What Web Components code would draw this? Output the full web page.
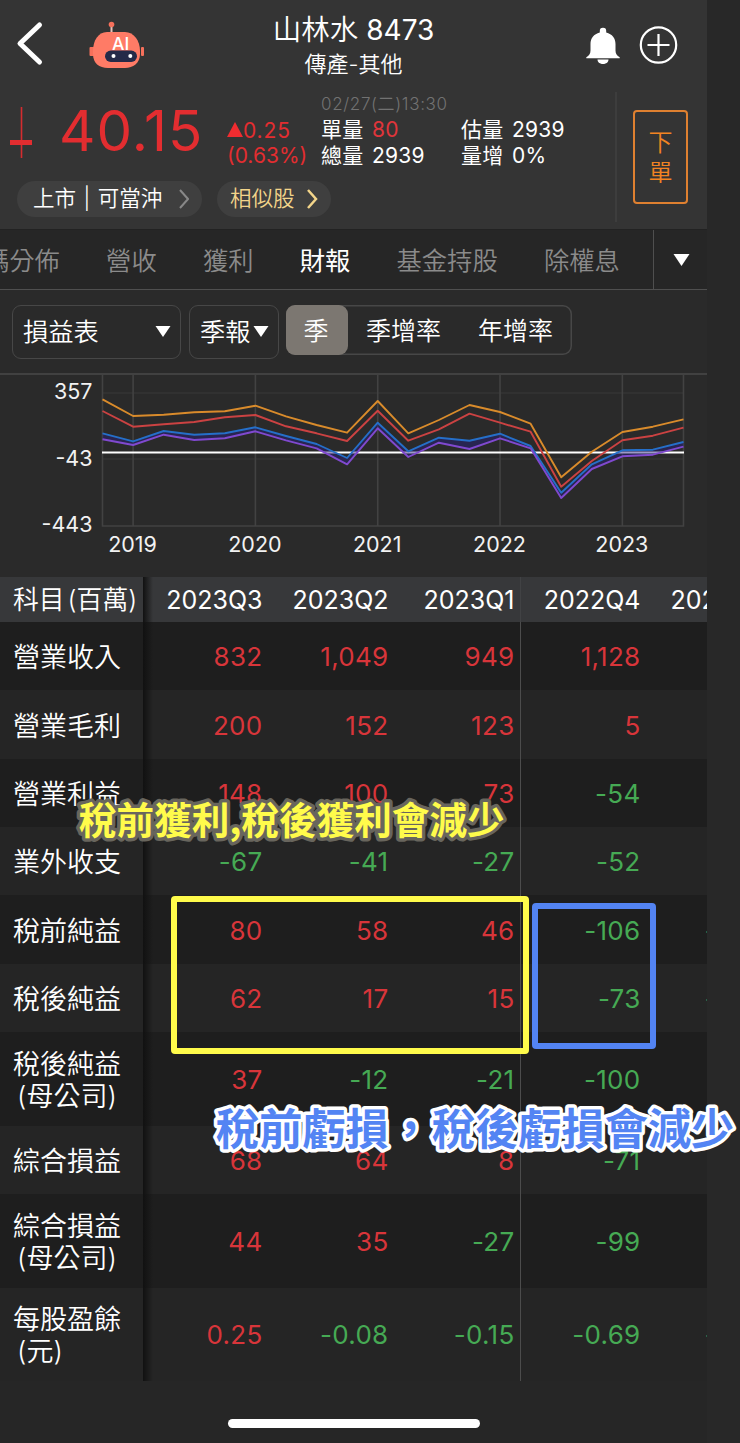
<!DOCTYPE html>
<html lang="zh-Hant">
<head>
<meta charset="utf-8">
<title>山林水 8473</title>
<style>
  body {
    margin: 0;
    background: #282828;
    color: #fff;
    font-family: Inter, "Noto Sans CJK TC", sans-serif;
    overflow: hidden;
  }
</style>
</head>
<body>
<stock-page></stock-page>

<script>
class StockHeader extends HTMLElement {
  constructor() {
    super();
    this.attachShadow({ mode: 'open' });
  }

  connectedCallback() {
    this.shadowRoot.innerHTML = `
      <style>
        :host {
          display: grid;
          grid-template-columns: 80px 150px 1fr 167px 80px;
          height: 90px;
          align-items: start;
        }
        svg { display: block; }
        .back { margin: 21px 0 0 16px; }
        .robot { margin: 20px 0 0 8px; }
        .title { text-align: center; padding: 11px 0 0 17px; }
        h1 { margin: 0; font-size: 28.5px; line-height: 38px; font-weight: 350; white-space: nowrap; }
        h1 span { font-size: 28px; font-weight: 400; }
        p { margin: 0; font-size: 22px; line-height: 30px; font-weight: 350; white-space: nowrap; }
        .bell { justify-self: end; margin: 27px 7px 0 0; }
        .add { margin: 26px 0 0 12px; }
      </style>
      <svg class="back" width="28" height="46" viewBox="0 0 28 46"><path d="M23.5 4 4 22.5 23.5 41" fill="none" stroke="#fff" stroke-width="5" stroke-linecap="round" stroke-linejoin="round"/></svg>
      <svg class="robot" width="58" height="50" viewBox="0 0 58 50">
        <path d="M23.5 5v9" stroke="#e9c3bb" stroke-width="2"/>
        <circle cx="23.5" cy="4.5" r="2.8" fill="#f6705b"/>
        <rect x="1.5" y="27" width="6" height="9" rx="1" fill="#f6705b"/>
        <rect x="53" y="27" width="3" height="9" rx="1" fill="#f6705b"/>
        <path d="M19 12h18c9 0 15 9 15 19v3c0 9-7 14-15 14H20C11 48 5 43 5 34v-3C5 21 10 12 19 12z" fill="#ff7b66"/>
        <text x="24" y="29.800" font-family="Inter" font-weight="500" font-size="17.500" fill="#fff">AI</text>
        <rect x="17" y="30.5" width="32" height="11.5" rx="5.75" fill="#252a48"/>
        <circle cx="25.5" cy="36" r="2" fill="#fff"/><circle cx="42.3" cy="36" r="2" fill="#fff"/>
      </svg>
      <div class="title"><h1>山林水 <span>8473</span></h1><p>傳產-其他</p></div>
      <svg class="bell" width="34" height="38" viewBox="0 0 34 38" fill="#fff">
        <path d="M17 .8a3.2 3.2 0 0 1 3.2 3.4v1.3C26.300 7 29.500 11.300 29.500 17v6.500c0 3.500 1.500 5 4.200 6.700v1H.3v-1c2.700-1.700 4.200-3.200 4.200-6.700V17C4.500 11.300 7.700 7 13.800 5.500V4.200A3.200 3.200 0 0 1 17 .8z"/>
        <path d="M11.500 32.500h11c0 6-11 6-11 0z"/>
      </svg>
      <svg class="add" width="39" height="39" viewBox="0 0 39 39" fill="none" stroke="#fff" stroke-width="2.200"><circle cx="19.500" cy="19" r="17.700"/><path d="M8.500 19h22M19.500 8v22"/></svg>
    `;
  }
}

class StockQuote extends HTMLElement {
  constructor() {
    super();
    this.attachShadow({ mode: 'open' });
  }

  connectedCallback() {
    this.shadowRoot.innerHTML = `
      <style>
        :host { display: flex; height: 139px; }
        .main { width: 615px; border-right: 2px solid #3d3d3d; margin: 2px 0 7px; }
        .row {
          display: grid;
          grid-template-columns: 49px 168px 94px 140px 1fr;
          padding-left: 10px;
          height: 89px;
          white-space: nowrap;
          font-size: 21px;
        }
        .candle { margin-top: 15px; }
        .price { font-size: 56.5px; line-height: 78px; color: #e32d30; letter-spacing: 1px; }
        .change { padding-top: 27px; line-height: 24.500px; color: #e32d30; }
        .change div:first-child { letter-spacing: .9px; }
        .change svg { vertical-align: 1px; }
        .vol { padding-top: 1px; line-height: 26px; }
        .vol div { letter-spacing: .2px; word-spacing: 2.500px; }
        .vol .time { font-size: 17px; line-height: 22px; height: 24px; color: #727272; font-weight: 350; letter-spacing: .65px; }
        .red { color: #e0353b; }
        .pills { display: flex; gap: 15px; margin-left: 17px; }
        .pill {
          display: flex;
          align-items: center;
          justify-content: space-between;
          box-sizing: border-box;
          height: 36px;
          border-radius: 18px;
          background: #3f3f3f;
          padding: 0 13px 0 16px;
          font-size: 21.5px;
          line-height: 30px;
          white-space: nowrap;
        }
        .pill span { margin-top: -2px; font-weight: 350; }
        .pill:first-child { width: 185px; word-spacing: 1.500px; }
        .pill:last-child { width: 114px; color: #f3d58a; padding: 0 11px 0 13px; }
        .order {
          box-sizing: border-box;
          width: 55px;
          height: 94px;
          margin: 20px 0 0 16px;
          border: 2px solid #df8030;
          border-radius: 4px;
          color: #f28422;
          font-size: 24px;
          font-weight: 350;
          line-height: 30px;
          text-align: center;
          padding-top: 16px;
        }
      </style>
      <div class="main">
        <div class="row">
          <svg class="candle" width="23" height="52" viewBox="0 0 23 52"><path d="M11.500 0v51" stroke="#d52c2f" stroke-width="1.600"/><path d="M0 35.500h22" stroke="#e32d30" stroke-width="5"/></svg>
          <div class="price">40.15</div>
          <div class="change">
            <div><svg width="16" height="15" viewBox="0 0 16 15"><path d="M8 0 16 15H0z" fill="#f02c30"/></svg>0.25</div>
            <div>(0.63%)</div>
          </div>
          <div class="vol">
            <div class="time">02/27(二)13:30</div>
            <div>單量 <span class="red">80</span></div>
            <div>總量 2939</div>
          </div>
          <div class="vol">
            <div class="time"></div>
            <div>估量 2939</div>
            <div>量增 0%</div>
          </div>
        </div>
        <div class="pills">
          <div class="pill"><span>上市 | 可當沖</span><svg width="10" height="20" viewBox="0 0 10 20"><path d="m1 1 8 9-8 9" fill="none" stroke="#888" stroke-width="2"/></svg></div>
          <div class="pill"><span>相似股</span><svg width="13" height="20" viewBox="0 0 13 20"><path d="m1 1 8 9-8 9" fill="none" stroke="#f3d58a" stroke-width="2.500"/></svg></div>
        </div>
      </div>
      <div class="order">下<br>單</div>
    `;
  }
}

class TabBar extends HTMLElement {
  constructor() {
    super();
    this.attachShadow({ mode: 'open' });
  }

  connectedCallback() {
    const tabs = this.getAttribute('tabs').split(',');
    const active = this.getAttribute('active');
    this.shadowRoot.innerHTML = `
      <style>
        :host { display: flex; height: 59px; background: #262626; border-top: 1px solid #222; border-bottom: 1.500px solid #4f4f4f; }
        .tabs { display: flex; gap: 46.2px; width: 669px; margin-left: -16px; overflow: hidden; font-size: 25.3px; line-height: 61px; white-space: nowrap; color: #8b8b8b; font-weight: 350; }
        .active { color: #fff; font-weight: 400; }
        .more { flex: 1; display: flex; align-items: center; padding-left: 19px; border-left: 1.500px solid #4f4f4f; }
      </style>
      <div class="tabs">${tabs.map(t => `<span class="${t === active ? 'active' : ''}">${t}</span>`).join('')}</div>
      <div class="more"><svg width="17" height="12" viewBox="0 0 17 12"><path d="M.5 0h16l-8 12z" fill="#fff"/></svg></div>
    `;
  }
}

class DropDown extends HTMLElement {
  constructor() {
    super();
    this.attachShadow({ mode: 'open' });
  }

  connectedCallback() {
    this.shadowRoot.innerHTML = `
      <style>
        :host {
          display: flex;
          align-items: center;
          justify-content: space-between;
          box-sizing: border-box;
          height: 54px;
          padding: 0 9px 0 10px;
          border: 1.5px solid #474747;
          border-radius: 9px;
          font-size: 25.200px;
          font-weight: 350;
          line-height: 36px;
          white-space: nowrap;
        }
        svg { margin-top: -1px; }
      </style>
      <div><slot></slot></div>
      <svg width="16" height="11" viewBox="0 0 16 11"><path d="M.5 0h15l-7.500 11z" fill="#fff"/></svg>
    `;
  }
}

class FilterBar extends HTMLElement {
  constructor() {
    super();
    this.attachShadow({ mode: 'open' });
  }

  connectedCallback() {
    this.shadowRoot.innerHTML = `
      <style>
        :host { display: flex; align-items: flex-start; height: 85px; padding: 15px 0 0 12px; box-sizing: border-box; border-bottom: 2px solid #414141; }
        .statement { width: 169px; margin-right: 8px; }
        .period { width: 90px; margin-right: 7px; }
        .segments { display: flex; box-sizing: border-box; width: 286px; height: 50px; box-shadow: inset 0 0 0 1.500px #474747; border-radius: 9px; font-size: 25px; font-weight: 350; line-height: 52px; text-align: center; white-space: nowrap; }
        .segments span { width: 112px; text-indent: -1px; }
        .segments .on { width: 62px; background: #7c7771; border-radius: 9px; text-indent: -2px; }
      </style>
      <drop-down class="statement">損益表</drop-down>
      <drop-down class="period">季報</drop-down>
      <div class="segments"><span class="on">季</span><span>季增率</span><span>年增率</span></div>
    `;
  }
}

class TrendChart extends HTMLElement {
  constructor() {
    super();
    this.attachShadow({ mode: 'open' });
  }

  connectedCallback() {
    const series = {
      '#d98b2b': [319, 219, 227, 241, 247, 281, 217, 165, 119, 309, 115, 195, 285, 243, 173, -149, 5, 123, 155, 199],
      '#cb4242': [249, 155, 169, 183, 211, 225, 157, 115, 69, 251, 71, 139, 233, 179, 125, -205, -51, 73, 101, 149],
      '#256fc9': [115, 67, 129, 107, 115, 151, 99, 51, -33, 179, 7, 89, 71, 113, 39, -241, -71, 13, 17, 63],
      '#8049cf': [79, 45, 107, 75, 85, 127, 73, 25, -71, 145, -27, 59, 21, 85, 25, -273, -99, -23, -13, 35]
    };
    const x = i => 102.5 + i * 30.58;
    const y = v => (495 - v) / 6 - 5;
    const years = [2019, 2020, 2021, 2022, 2023];
    const lines = Object.entries(series).map(([color, values]) =>
      `<polyline points="${values.map((v, i) => `${x(i).toFixed(1)},${y(v).toFixed(1)}`).join(' ')}" stroke="${color}"/>`).join('');
    const band = series['#256fc9'].map((v, i) => `${x(i)},${y(v)}`)
      .concat(series['#8049cf'].map((v, i) => `${x(i)},${y(v)}`).reverse()).join(' ');

    this.shadowRoot.innerHTML = `
      <style>
        :host { display: block; height: 202px; }
        svg { display: block; }
        .grid { stroke: #424242; stroke-width: 1.6; fill: none; }
        .faint { stroke: #353535; stroke-width: 1.6; }
        .lines { fill: none; stroke-width: 1.9; stroke-linejoin: round; }
        text { fill: #f2f2f2; font-size: 21.5px; }
      </style>
      <svg width="707" height="202" viewBox="0 0 707 202">
        <path class="faint" d="M102 18H684M102 84H684"/>
        <path class="grid" d="M102.500 0V151H683.500V0${years.map((_, i) => `M${x(1 + i * 4)} 0V151`).join('')}"/>
        <path class="lines" stroke="#fff" d="M102 77.500H684" style="stroke-width:2.200"/>
        <polygon points="${band}" fill="#252080" opacity=".45"/>
        <g class="lines">${lines}</g>
        <g text-anchor="end">
          <text x="92.500" y="24">357</text>
          <text x="92.500" y="90.500">-43</text>
          <text x="92.500" y="157">-443</text>
        </g>
        <g text-anchor="middle">${years.map((t, i) => `<text x="${x(1 + i * 4) - 0.5}" y="176.500">${t}</text>`).join('')}</g>
      </svg>
    `;
  }
}

class ReportTable extends HTMLElement {
  constructor() {
    super();
    this.attachShadow({ mode: 'open' });
  }

  connectedCallback() {
    // a fifth value is scrolled out of view, only its minus sign reaches the edge
    const rows = [
      ['營業收入', '832', '1,049', '949', '1,128'],
      ['營業毛利', '200', '152', '123', '5'],
      ['營業利益', '148', '100', '73', '-54'],
      ['業外收支', '-67', '-41', '-27', '-52'],
      ['稅前純益', '80', '58', '46', '-106', '-'],
      ['稅後純益', '62', '17', '15', '-73', '-'],
      ['稅後純益<br>(母公司)', '37', '-12', '-21', '-100'],
      ['綜合損益', '68', '64', '8', '-71'],
      ['綜合損益<br>(母公司)', '44', '35', '-27', '-99'],
      ['每股盈餘<br>(元)', '0.25', '-0.08', '-0.15', '-0.69', '-']
    ];
    const cell = v => `<span class="num ${v[0] === '-' ? 'down' : 'up'}">${v}</span>`;

    this.shadowRoot.innerHTML = `
      <style>
        :host { display: block; overflow: hidden; font-size: 26px; }
        .row {
          display: grid;
          grid-template-columns: 143px 125.500px 126px 126px 126px 1fr;
          height: 68.350px;
          background: #252525;
          overflow: hidden;
        }
        .row:nth-of-type(even) { background: #1e1e1e; }
        .row.tall { height: 93.600px; }
        .row.head { height: 45px; background: #37383a; }
        .row > span { display: flex; align-items: center; justify-content: flex-end; padding: 1px 6px 0 0; white-space: nowrap; }
        .row > .num { letter-spacing: .3px; }
        .row > .label {
          justify-content: flex-start;
          padding: 4px 0 0 13px;
          font-size: 27px;
          line-height: 32px;
          font-weight: 350;
        }
        .row > span:nth-child(2) { background: linear-gradient(90deg, #111, rgba(17, 17, 17, 0) 10px); }
        .row > span:nth-child(4) { border-right: 1.500px solid #4c4c4c; padding-right: 5px; }
        .row.head > span:nth-child(4) { border-color: #414244; }
        .indent { padding-left: 4px; }
        .row > span.last { justify-content: flex-start; padding-left: 58.300px; }
        .row.head > span.last { padding-left: 24px; }
        .head { font-size: 25px; }
        .row.head > .label { font-size: 25.800px; padding-top: 1px; }
        .up { color: #d8353a; }
        .down { color: #46aa54; }
      </style>
      <div class="row head">
        <span class="label">科目<span style="margin-left:3px">(百萬)</span></span>
        <span>2023Q3</span><span>2023Q2</span><span>2023Q1</span><span>2022Q4</span><span class="last">2022Q3</span>
      </div>
      ${rows.map(([label, ...v]) => `
        <div class="row ${label.includes('<br>') ? 'tall' : ''}">
          <span class="label"><span>${label.replace('<br>', '<br><span class="indent"></span>')}</span></span>
          ${v.slice(0, 4).map(cell).join('')}
          ${v[4] ? `<span class="last down">${v[4]}</span>` : ''}
        </div>`).join('')}
    `;
  }
}

class MarkBox extends HTMLElement {
  constructor() {
    super();
    this.attachShadow({ mode: 'open' });
    this.shadowRoot.innerHTML = `
      <style>
        :host { position: absolute; box-sizing: border-box; border: 6.500px solid var(--mark); border-radius: 4px; }
      </style>
    `;
  }
}

class MarkText extends HTMLElement {
  constructor() {
    super();
    this.attachShadow({ mode: 'open' });
  }

  connectedCallback() {
    const size = this.getAttribute('size');
    this.shadowRoot.innerHTML = `
      <style>
        :host { position: absolute; }
        svg { display: block; overflow: visible; }
        text {
          font: 700 ${size}px "Noto Sans CJK TC", sans-serif;
          fill: var(--mark);
          stroke: var(--edge);
          stroke-width: ${this.getAttribute('edge')}px;
          stroke-linejoin: round;
          paint-order: stroke;
        }
      </style>
      <svg width="10" height="${size}"><text x="0" y="${size * 0.88}">${this.getAttribute('text')}</text></svg>
    `;
  }
}

class StockPage extends HTMLElement {
  constructor() {
    super();
    this.attachShadow({ mode: 'open' });
  }

  connectedCallback() {
    this.shadowRoot.innerHTML = `
      <style>
        :host { display: block; position: relative; width: 740px; height: 1443px; overflow: hidden; }
        .phone { display: flex; flex-direction: column; width: 707px; height: 1443px; background: #2a2a2a; }
        .top { background: #343434; }
        .foot { flex: 1; background: #262626; display: flex; justify-content: center; align-items: flex-end; padding-bottom: 15px; }
        .home { width: 252px; height: 9px; border-radius: 5px; background: #fff; }
        .yellow { --mark: #fffb4b; --edge: #68655d; }
        .blue { --mark: #5384f3; --edge: #fff; }
        mark-box.yellow { left: 171px; top: 896px; width: 358px; height: 158px; }
        mark-box.blue { left: 532px; top: 903px; width: 124px; height: 146px; }
        mark-text.yellow { left: 79px; top: 801px; }
        mark-text.blue { left: 216px; top: 1107px; }
      </style>
      <div class="phone">
        <div class="top">
          <stock-header></stock-header>
          <stock-quote></stock-quote>
        </div>
        <tab-bar tabs="碼分佈,營收,獲利,財報,基金持股,除權息" active="財報"></tab-bar>
        <filter-bar></filter-bar>
        <trend-chart></trend-chart>
        <report-table></report-table>
        <div class="foot"><div class="home"></div></div>
      </div>
      <mark-box class="yellow"></mark-box>
      <mark-box class="blue"></mark-box>
      <mark-text class="yellow" size="37.6" edge="7" text="稅前獲利,稅後獲利會減少"></mark-text>
      <mark-text class="blue" size="43.2" edge="7" text="稅前虧損，稅後虧損會減少"></mark-text>
    `;
  }
}

customElements.define('stock-header', StockHeader);
customElements.define('stock-quote', StockQuote);
customElements.define('tab-bar', TabBar);
customElements.define('drop-down', DropDown);
customElements.define('filter-bar', FilterBar);
customElements.define('trend-chart', TrendChart);
customElements.define('report-table', ReportTable);
customElements.define('mark-box', MarkBox);
customElements.define('mark-text', MarkText);
customElements.define('stock-page', StockPage);
</script>
</body>
</html>
